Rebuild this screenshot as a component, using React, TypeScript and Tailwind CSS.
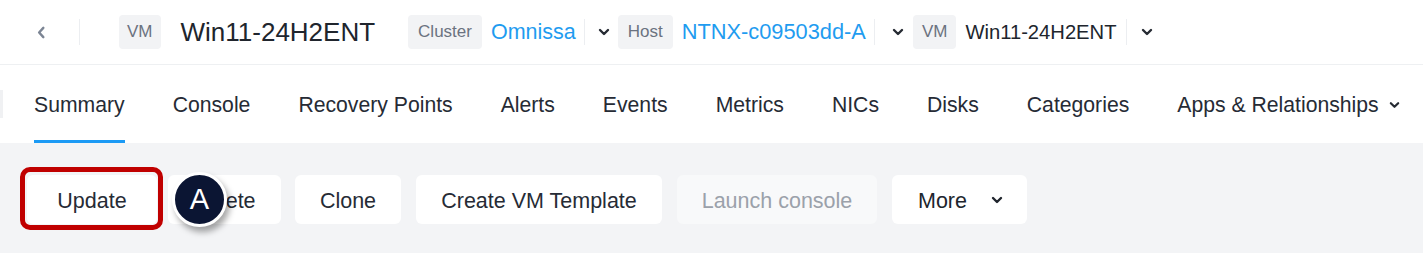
import React from "react";

const Chevron = ({ className = "" }: { className?: string }) => (
  <svg viewBox="0 0 12 8" className={className} fill="none">
    <path d="M2 2l4 4 4-4" stroke="currentColor" strokeWidth="2.4" strokeLinecap="round" strokeLinejoin="round" />
  </svg>
);

const Badge = ({ children }: { children: React.ReactNode }) => (
  <span className="h-[34px] px-[10px] rounded-[4px] bg-[#f2f3f5] text-[#6b7280] text-[17px] flex items-center">
    {children}
  </span>
);

const Divider = () => <span className="block w-px h-[26px] bg-[#eceef1]" />;

const tabs = [
  "Summary",
  "Console",
  "Recovery Points",
  "Alerts",
  "Events",
  "Metrics",
  "NICs",
  "Disks",
  "Categories",
];

const App: React.FC = () => {
  return (
    <div
      className="w-[1423px] h-[253px] bg-[#f3f4f6] overflow-hidden text-[#252a33]"
      style={{ fontFamily: '"Liberation Sans", Arial, sans-serif' }}
    >
      {/* HEADER */}
      <div className="h-[65px] bg-white border-b border-[#eef0f2] flex items-center">
        <div className="w-[79px] flex justify-center pl-[2px]">
          <svg viewBox="0 0 10 14" className="w-[10px] h-[13px] text-[#7c8594]" fill="none">
            <path d="M7.5 2L3 7l4.5 5" stroke="currentColor" strokeWidth="2.6" strokeLinecap="round" strokeLinejoin="round" />
          </svg>
        </div>
        <Divider />
        <div className="ml-[39px] flex items-center">
          <span className="[&>span]:px-[8px]">
            <Badge>VM</Badge>
          </span>
          <span className="ml-[20px] text-[26px] text-[#20252d]">Win11-24H2ENT</span>
          <span className="ml-[33px]">
            <Badge>Cluster</Badge>
          </span>
          <span className="ml-[9px] text-[21.5px] text-[#1f9cf0]">Omnissa</span>
          <span className="ml-[8px]">
            <Divider />
          </span>
          <Chevron className="ml-[13px] w-[12px] h-[8px] text-[#262b33]" />
          <span className="ml-[8px]">
            <Badge>Host</Badge>
          </span>
          <span className="ml-[9px] text-[21.8px] text-[#1f9cf0]">NTNX-c09503dd-A</span>
          <span className="ml-[8px]">
            <Divider />
          </span>
          <Chevron className="ml-[17px] w-[12px] h-[8px] text-[#262b33]" />
          <span className="ml-[9px] [&>span]:px-[9px]">
            <Badge>VM</Badge>
          </span>
          <span className="ml-[9px] text-[20.2px] text-[#20252d]">Win11-24H2ENT</span>
          <span className="ml-[9px]">
            <Divider />
          </span>
          <Chevron className="ml-[14px] w-[12px] h-[8px] text-[#262b33]" />
        </div>
      </div>

      {/* TABS */}
      <div className="h-[78px] bg-white flex items-stretch">
        <div className="w-[3px] h-[28px] self-center bg-[#f0f1f3]" />
        <div className="ml-[31px] flex items-stretch gap-[48px]">
          {tabs.map((t, i) => (
            <div key={t} className="relative flex items-center pt-[2px] text-[21.2px] text-[#262b35]">
              {t}
              {i === 0 && (
                <span className="absolute left-0 right-0 bottom-0 h-[3px] bg-[#1b9af5]" />
              )}
            </div>
          ))}
          <div className="flex items-center pt-[2px] text-[21.2px] text-[#262b35]">
            Apps &amp; Relationships
            <Chevron className="ml-[10px] w-[11px] h-[8px] text-[#262b33]" />
          </div>
        </div>
      </div>

      {/* ACTIONS */}
      <div className="relative pt-[32px] pl-[27px] flex items-start text-[21.5px]">
        <button className="h-[49px] w-[130px] pt-[3px] rounded-[6px] bg-white text-[#262b35]">Update</button>
        <button className="ml-[11px] h-[49px] w-[113px] pt-[3px] rounded-[6px] bg-white text-[#262b35]">Delete</button>
        <button className="ml-[14px] h-[49px] w-[106px] pt-[3px] rounded-[6px] bg-white text-[#262b35]">Clone</button>
        <button className="ml-[15px] h-[49px] w-[246px] pt-[3px] rounded-[6px] bg-white text-[#262b35]">Create VM Template</button>
        <button className="ml-[15px] h-[49px] w-[200px] pt-[3px] rounded-[6px] bg-[#f8f9fa] text-[#9ba1aa]">Launch console</button>
        <button className="ml-[15px] h-[49px] w-[135px] pl-[26px] pt-[3px] rounded-[6px] bg-white text-[#20252d] flex items-center">
          More
          <Chevron className="ml-[24px] -mt-[3px] w-[12px] h-[8px] text-[#20252d]" />
        </button>

        {/* highlight */}
        <div className="absolute left-[20px] top-[24px] w-[143px] h-[63px] border-[5px] border-[#c00000] rounded-[10px]" />
        <div className="absolute left-[172px] top-[29px] w-[55px] h-[55px] rounded-full bg-[#0b1533] border-[3px] border-white shadow-[3px_5px_6px_rgba(0,0,0,0.35)] flex items-center justify-center text-white text-[29px]">
          A
        </div>
      </div>
    </div>
  );
};

export default App;
